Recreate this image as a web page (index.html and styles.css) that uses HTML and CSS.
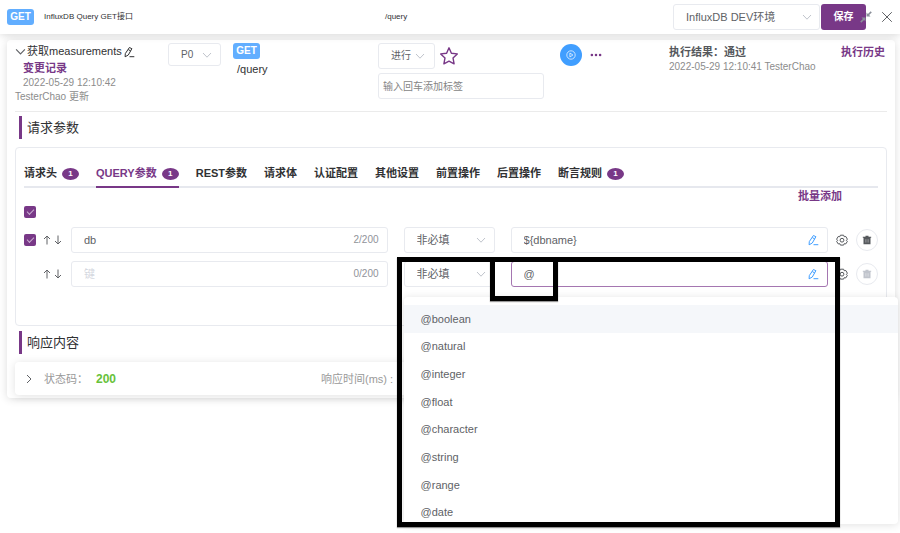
FILE: index.html
```html
<!DOCTYPE html>
<html lang="zh-CN">
<head>
<meta charset="utf-8">
<meta name="viewport" content="width=device-width, initial-scale=1">
<title>InfluxDB Query GET接口</title>
<link rel="stylesheet" href="styles.css">
</head>
<body>
<svg class="sprite" aria-hidden="true">
  <symbol id="chevron" viewBox="0 0 10 10"><path d="M1 3l4 4.200 4-4.200"/></symbol>
  <symbol id="pen" viewBox="0 0 12 12"><path d="M6.400 1.500l2.500 1.200-3.600 6.300-3.200 1.800.2-3.200zM5.300 3.600l2.400 1.300M6.500 10.700h4.800"/></symbol>
  <symbol id="up" viewBox="0 0 10 10"><path d="M5 9.500V1M2 4l3-3 3 3"/></symbol>
  <symbol id="down" viewBox="0 0 10 10"><path d="M5 .5V9M2 6l3 3 3-3"/></symbol>
  <symbol id="gear" viewBox="0 0 12 12"><path d="M4.400 1.200h3.200l.6 1.500 1.600-.2 1.600 2.700-1 1.100 1 1-1.600 2.600-1.600-.2-.6 1.400H4.400l-.6-1.400-1.600.2L.6 7.300l1-1-1-1.100 1.600-2.700 1.600.2z"/><circle cx="6" cy="6.200" r="1.900"/></symbol>
  <symbol id="trash" viewBox="0 0 10 10"><path d="M3.500.8h3v1h2.700v1H8.500v6.400h-7V2.800H.8v-1h2.700z" fill="currentColor" stroke="none"/><path d="M3.900 4.200v3.400M6.100 4.200v3.400" stroke="#fff" stroke-width=".7" opacity=".6"/></symbol>
</svg>

<header class="topbar">
  <div class="api-name"><span class="method">GET</span><span>InfluxDB Query GET接口</span></div>
  <div class="api-path">/query</div>
  <div class="actions">
    <span class="select env"><select aria-label="环境"><option>InfluxDB DEV环境</option></select><svg class="icon chevron"><use href="#chevron"/></svg></span>
    <button class="save" type="button">保存</button>
    <button class="plain shrink" type="button" aria-label="收起"><svg class="icon" viewBox="0 0 12 12"><path d="M6.500 5.500V1.500l1.400 1.400L10.700.3l1.100 1.100-2.700 2.700 1.400 1.400zM5.500 6.500v4L4.100 9.100l-2.800 2.600-1.100-1.100 2.700-2.700-1.400-1.400z" fill="#8a8f99" stroke="none"/></svg></button>
    <button class="plain close" type="button" aria-label="关闭"><svg class="icon" viewBox="0 0 12 12"><path d="M1.200 1.200l9.600 9.600M10.800 1.200l-9.600 9.600"/></svg></button>
  </div>
</header>

<main class="card">
  <section class="summary">
    <div class="case">
      <div class="case-title"><svg class="icon chevron-dark"><use href="#chevron"/></svg><span>获取measurements</span><svg class="icon"><use href="#pen"/></svg></div>
      <a class="link change-log" href="#">变更记录</a>
      <p class="meta updated">2022-05-29 12:10:42 TesterChao 更新</p>
    </div>
    <div><span class="select priority"><select aria-label="优先级"><option>P0</option></select><svg class="icon chevron"><use href="#chevron"/></svg></span></div>
    <div class="endpoint"><span class="method">GET</span><span class="endpoint-path">/query</span></div>
    <div class="status">
      <div class="status-line">
        <span class="select state"><select aria-label="状态"><option>进行</option></select><svg class="icon chevron"><use href="#chevron"/></svg></span>
        <button class="plain star" type="button" aria-label="收藏"><svg class="icon" viewBox="0 0 20 20"><path d="M10 1.800l2.400 5.400 5.900.7-4.300 4 1.100 5.900L10 15.100l-5.100 2.700L6 11.900l-4.300-4 5.900-.7z"/></svg></button>
      </div>
      <input class="tag-input" type="text" aria-label="标签" placeholder="输入回车添加标签">
    </div>
    <div class="run">
      <button class="play" type="button" aria-label="执行"><svg class="icon" viewBox="0 0 10 10"><circle cx="5" cy="5" r="4.200"/><path d="M3.900 3l3 2-3 2z"/></svg></button>
      <button class="plain more" type="button" aria-label="更多"><svg class="icon" viewBox="0 0 12 4"><path d="M.6 2a1.300 1.300 0 1 0 2.600 0a1.300 1.300 0 1 0-2.600 0M4.700 2a1.300 1.300 0 1 0 2.600 0a1.300 1.300 0 1 0-2.600 0M8.800 2a1.300 1.300 0 1 0 2.600 0a1.300 1.300 0 1 0-2.600 0" fill="currentColor" stroke="none"/></svg></button>
    </div>
    <div class="result"><strong>执行结果：通过</strong><p class="meta">2022-05-29 12:10:41 TesterChao</p></div>
    <a class="link" href="#">执行历史</a>
  </section>

  <h2>请求参数</h2>
  <section class="panel">
    <nav class="tabs">
      <a href="#">请求头<span class="count">1</span></a>
      <a class="active" href="#">QUERY参数<span class="count">1</span></a>
      <a href="#">REST参数</a>
      <a href="#">请求体</a>
      <a href="#">认证配置</a>
      <a href="#">其他设置</a>
      <a href="#">前置操作</a>
      <a href="#">后置操作</a>
      <a href="#">断言规则<span class="count">1</span></a>
    </nav>
    <div class="batch"><a class="link" href="#">批量添加</a></div>
    <div class="all"><input type="checkbox" aria-label="全选" checked></div>

    <div class="param">
      <div class="handle"><input type="checkbox" aria-label="启用 db" checked>
        <span class="move"><button class="plain" type="button" aria-label="上移"><svg class="icon"><use href="#up"/></svg></button><button class="plain" type="button" aria-label="下移"><svg class="icon"><use href="#down"/></svg></button></span></div>
      <div class="field key"><input type="text" aria-label="键" value="db"><span class="limit">2/200</span></div>
      <div class="target">
        <span class="select required"><select aria-label="必填"><option>非必填</option></select><svg class="icon chevron"><use href="#chevron"/></svg></span>
        <div class="field value"><input type="text" aria-label="值" value="${dbname}"><svg class="icon edit"><use href="#pen"/></svg></div>
      </div>
      <div class="tools"><button class="plain gear" type="button" aria-label="设置"><svg class="icon"><use href="#gear"/></svg></button><button class="trash" type="button" aria-label="删除"><svg class="icon"><use href="#trash"/></svg></button></div>
    </div>

    <div class="param">
      <div class="handle"><span class="move"><button class="plain" type="button" aria-label="上移"><svg class="icon"><use href="#up"/></svg></button><button class="plain" type="button" aria-label="下移"><svg class="icon"><use href="#down"/></svg></button></span></div>
      <div class="field key"><input type="text" aria-label="键" placeholder="键"><span class="limit">0/200</span></div>
      <div class="target">
        <span class="select required"><select aria-label="必填"><option>非必填</option></select><svg class="icon chevron"><use href="#chevron"/></svg></span>
        <div class="field value focused"><input type="text" aria-label="值" value="@"><svg class="icon edit"><use href="#pen"/></svg></div>
        <div class="dropdown">
          <ul role="listbox" aria-label="变量">
            <li role="option" aria-selected="true">@boolean</li>
            <li role="option">@natural</li>
            <li role="option">@integer</li>
            <li role="option">@float</li>
            <li role="option">@character</li>
            <li role="option">@string</li>
            <li role="option">@range</li>
            <li role="option">@date</li>
          </ul>
        </div>
        <div class="mark mark-menu"></div>
        <div class="mark mark-value"></div>
      </div>
      <div class="tools"><button class="plain gear" type="button" aria-label="设置"><svg class="icon"><use href="#gear"/></svg></button><button class="trash" type="button" aria-label="删除" disabled><svg class="icon"><use href="#trash"/></svg></button></div>
    </div>
  </section>

  <h2>响应内容</h2>
  <section class="response">
    <div class="response-item"><svg class="icon expand" viewBox="0 0 10 10"><path d="M3 1l4 4-4 4"/></svg><span>状态码：</span><strong>200</strong></div>
    <div class="response-item">响应时间(ms) :</div>
  </section>
</main>
</body>
</html>
```
FILE: styles.css
```css
:root {
  --purple: #783887;
  --text: #303133;
  --regular: #606266;
  --muted: #909399;
  --border: #e8eaef;
}

* { box-sizing: border-box; }

body {
  min-height: 100vh;
  margin: 0;
  background: #fff;
  color: var(--text);
  font: 11px/16px "Liberation Sans", "Noto Sans CJK SC", sans-serif;
}

p, h2, ul { margin: 0; padding: 0; }
ul { list-style: none; }
a { color: inherit; text-decoration: none; }
input, select, button { font: inherit; color: inherit; margin: 0; }

.sprite { position: absolute; width: 0; height: 0; }

.icon {
  display: block;
  flex: none;
  width: 12px;
  height: 12px;
  fill: none;
  stroke: currentColor;
  stroke-width: 1;
}

.plain { padding: 0; border: 0; background: none; }
.link { color: var(--purple); font-weight: bold; }
.meta { color: #8c8c8c; font-size: 10px; line-height: 14px; }

.method {
  display: inline-block;
  width: 27px;
  border-radius: 3px;
  background: #62aeff;
  color: #fff;
  font-size: 10px;
  font-weight: bold;
  text-align: center;
}

/* Top bar */
.topbar {
  position: relative;
  display: grid;
  grid-template-columns: 378fr 288fr auto;
  align-items: center;
  height: 34px;
  padding: 0 7px;
  background: #fff;
  box-shadow: 0 1px 8px rgba(0, 0, 0, .16);
  font-size: 8px;
}
.api-name { display: flex; align-items: center; gap: 10px; }
.actions { display: flex; align-items: center; font-size: 11px; }
.save {
  width: 45px;
  height: 26px;
  margin-left: 1px;
  padding: 0;
  border: 0;
  border-radius: 3px;
  background: var(--purple);
  color: #fff;
  font-size: 10px;
  font-weight: bold;
}
.shrink { margin: 0 9px 0 -6px; }
.close { color: var(--regular); }

/* Form controls */
.select {
  display: inline-flex;
  align-items: center;
  height: 26px;
  padding-right: 8px;
  border: 1px solid var(--border);
  border-radius: 3px;
  background: #fff;
  color: var(--regular);
}
.select select {
  flex: 1;
  min-width: 0;
  height: 100%;
  padding: 0 0 0 12px;
  border: 0;
  outline: 0;
  appearance: none;
  background: none;
}
.chevron { width: 10px; height: 10px; color: #c0c4cc; }
.env { width: 147px; padding-right: 7px; }
.priority { width: 53px; height: 23px; font-size: 10px; }
.state { width: 57px; padding-right: 9px; font-size: 10px; }
.required { flex: none; width: 91px; }

.field {
  display: flex;
  align-items: center;
  height: 26px;
  padding: 0 8px 0 12px;
  border: 1px solid var(--border);
  border-radius: 3px;
  color: var(--regular);
}
.field input {
  flex: 1;
  min-width: 0;
  padding: 0;
  border: 0;
  outline: 0;
  background: none;
}
.field ::placeholder { color: #d5d8df; }
.limit { color: var(--muted); font-size: 10px; }
.edit { color: #409eff; }
.focused { border-color: #a576b1; }

[type="checkbox"] {
  display: grid;
  place-items: center;
  width: 12px;
  height: 12px;
  border-radius: 2px;
  appearance: none;
  background: var(--purple);
}
[type="checkbox"]::after {
  content: "";
  width: 6px;
  height: 3px;
  margin-bottom: 2px;
  border: solid #c9aed0;
  border-width: 0 0 1px 1px;
  transform: rotate(-45deg);
}

/* Card */
.card {
  margin: 6px 5px 0 7px;
  padding: 3px 8px;
  border-radius: 4px;
  background: #fff;
  box-shadow: 0 1px 8px rgba(0, 0, 0, .14);
}

.summary {
  display: grid;
  grid-template-columns: 153fr 65fr 145fr 182fr 109fr 172fr 46fr;
  height: 69px;
  border-bottom: 1px solid #ebebeb;
}
.summary > * { min-width: 0; }
.summary > .link { white-space: nowrap; line-height: 18px; }
.case-title { display: flex; align-items: center; gap: 1px; line-height: 17px; }
.chevron-dark { width: 11px; height: 11px; color: var(--regular); }
.change-log { display: block; padding-left: 8px; }
.updated { width: 108px; text-indent: 8px; }
.endpoint { display: flex; flex-direction: column; }
.endpoint-path { padding: 2px 4px; }
.status { display: flex; flex-direction: column; align-items: flex-start; gap: 4px; }
.status-line { display: flex; align-items: center; gap: 4px; }
.star { color: var(--purple); }
.star .icon { width: 20px; height: 20px; stroke-width: 1.4; stroke-linejoin: round; }
.tag-input {
  width: 166px;
  height: 26px;
  padding: 0 4px;
  border: 1px solid var(--border);
  border-radius: 3px;
  font-size: 10px;
}
.tag-input::placeholder { color: #858585; }
.run { display: flex; align-items: center; gap: 8px; height: 23px; }
.play {
  display: grid;
  place-items: center;
  width: 22px;
  height: 22px;
  padding: 0;
  border: 0;
  border-radius: 50%;
  background: #409eff;
  color: #fff;
}
.play .icon { width: 10px; height: 10px; stroke-width: .7; }
.more { color: var(--purple); }
.more .icon { height: 4px; }
.result strong { display: block; color: #55585c; line-height: 18px; }
.result .meta { line-height: 12px; white-space: nowrap; }

h2 {
  margin: 4px 4px 0;
  padding-left: 5px;
  border-left: 3px solid var(--purple);
  font-size: 13px;
  font-weight: normal;
  line-height: 23px;
}

/* Parameter panel */
.panel {
  height: 179px;
  margin: 8px 0 5px;
  padding: 12px 8px 0;
  border: 1px solid var(--border);
  border-radius: 4px;
}
.tabs {
  display: flex;
  gap: 17px;
  height: 28px;
  border-bottom: 2px solid #e6e8ee;
  font-weight: bold;
  white-space: nowrap;
}
.tabs a {
  display: flex;
  align-items: center;
  gap: 5px;
  height: 28px;
  padding-bottom: 2px;
}
.tabs .active { border-bottom: 2px solid var(--purple); padding: 0; color: var(--purple); }
.count {
  width: 17px;
  margin-top: 2px;
  border-radius: 50%;
  background: var(--purple);
  color: #fff;
  font-size: 8px;
  line-height: 12px;
  text-align: center;
}
.batch { padding-right: 36px; text-align: right; }
.all { display: flex; margin: 2px 0 9px; }

.param {
  display: grid;
  grid-template-columns: 47px minmax(0, 333fr) minmax(0, 425fr) auto;
  margin-bottom: 8px;
}
.handle { display: flex; align-items: center; }
.move { display: flex; gap: 1px; margin: 0 8px 0 auto; color: var(--regular); }
.move .icon { width: 10px; height: 10px; }
.key { margin-right: 16px; }
.target { position: relative; display: flex; gap: 16px; }
.value { flex: 1; min-width: 0; }
.tools { display: flex; align-items: center; gap: 8px; padding-left: 8px; }
.gear { color: #55585c; }
.trash {
  display: grid;
  place-items: center;
  width: 22px;
  height: 22px;
  padding: 0;
  border: 1px solid var(--border);
  border-radius: 50%;
  background: #fff;
  color: #55585c;
}
.trash .icon { width: 10px; height: 10px; }
.trash:disabled { color: #c0c4cc; }

.dropdown {
  position: absolute;
  z-index: 2;
  top: 36px;
  left: 0;
  right: -70px;
  height: 227px;
  padding-top: 8px;
  overflow: hidden;
  border-radius: 4px;
  background: #fff;
  box-shadow: 0 1px 8px rgba(0, 0, 0, .12);
  color: var(--regular);
}
.dropdown ul { display: grid; grid-auto-rows: 1fr; height: 221px; }
.dropdown li { display: flex; align-items: center; padding: 0 17px; }
.dropdown [aria-selected="true"] { background: #f5f7fa; }

/* Highlight frames */
.mark {
  position: absolute;
  z-index: 3;
  top: -4px;
  border: 5px solid #000;
  box-shadow: 0 1px 1px rgba(0, 0, 0, .4);
  pointer-events: none;
}
.mark-menu { left: -7px; right: -12px; height: 270px; }
.mark-value { left: 86px; width: 68px; height: 44px; }

/* Response */
.response {
  display: grid;
  grid-template-columns: 306fr 566fr;
  align-items: center;
  height: 33px;
  margin: 8px 0 0;
  border-radius: 4px;
  background: #fff;
  box-shadow: 0 1px 8px rgba(0, 0, 0, .12);
  color: #999;
}
.response-item { display: flex; align-items: center; }
.expand { width: 10px; height: 10px; margin: 0 10px 0 9px; color: var(--regular); }
.response strong { margin-left: 8px; color: #67c23a; font-size: 12px; }
```
